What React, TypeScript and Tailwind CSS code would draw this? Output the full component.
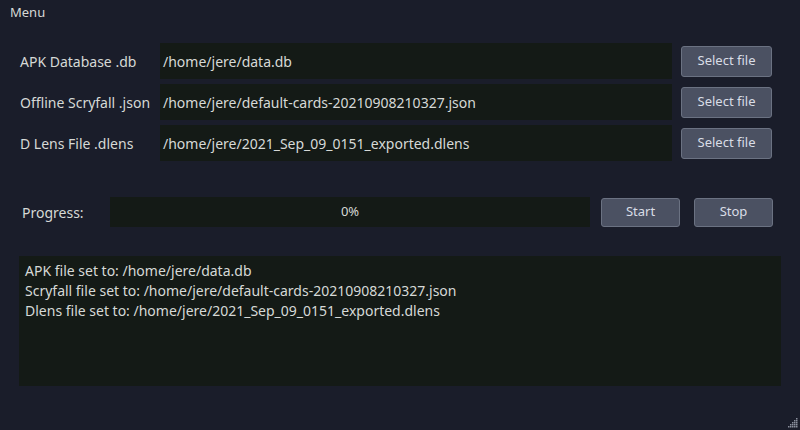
const FONT = { fontFamily: '"Noto Sans", "Open Sans", sans-serif' };

const files = [
  { label: 'APK Database .db', path: '/home/jere/data.db' },
  { label: 'Offline Scryfall .json', path: '/home/jere/default-cards-20210908210327.json' },
  { label: 'D Lens File .dlens', path: '/home/jere/2021_Sep_09_0151_exported.dlens' },
];

const log = [
  'APK file set to: /home/jere/data.db',
  'Scryfall file set to: /home/jere/default-cards-20210908210327.json',
  'Dlens file set to: /home/jere/2021_Sep_09_0151_exported.dlens',
];

function Btn({ children, className }: { children: string; className: string }) {
  return (
    <button
      className={`flex items-center justify-center rounded-[3px] border border-[#6b7282] bg-[#4b5162] text-[13px] text-[#d9dde6] ${className}`}
    >
      {children}
    </button>
  );
}

export default function App() {
  return (
    <div
      className="relative flex h-[430px] w-[800px] flex-col bg-[#1a1d2a] text-[14px] text-[#d6d9d6]"
      style={FONT}
    >
      <div className="h-[24px] pl-[10px] pt-[3px] text-[13px] leading-[18px]">Menu</div>

      {/* File pickers */}
      <div className="mt-[19px] flex flex-col gap-[5px] pl-[20px]">
        {files.map((f) => (
          <div key={f.label} className="flex h-[36px] items-center">
            <div className="w-[140px]">{f.label}</div>
            <div className="flex h-full w-[512px] items-center bg-[#141a16] pl-[3px]">{f.path}</div>
            <Btn className="ml-[9px] h-[31px] w-[91px]">Select file</Btn>
          </div>
        ))}
      </div>

      {/* Progress */}
      <div className="mt-[36px] flex h-[30px] items-center pl-[22px]">
        <div className="w-[88px]">Progress:</div>
        <div className="flex h-full w-[480px] items-center justify-center bg-[#141a16] text-[13px]">0%</div>
        <Btn className="ml-[11px] h-[29px] w-[79px]">Start</Btn>
        <Btn className="ml-[14px] h-[29px] w-[79px]">Stop</Btn>
      </div>

      {/* Log */}
      <div className="ml-[19px] mt-[29px] h-[130px] w-[762px] bg-[#141a16] px-[6px] pt-[5px] leading-[20px]">
        {log.map((l) => (
          <div key={l}>{l}</div>
        ))}
      </div>

      {/* Size grip */}
      <svg className="absolute bottom-[2px] right-[2px]" width="12" height="12" viewBox="0 0 12 12">
        {[
          [10, 2],
          [8, 4],
          [10, 4],
          [6, 6],
          [8, 6],
          [10, 6],
          [4, 8],
          [6, 8],
          [8, 8],
          [10, 8],
          [2, 10],
          [4, 10],
          [6, 10],
          [8, 10],
          [10, 10],
        ].map(([x, y], i) => (
          <rect key={i} x={x} y={y} width="1.5" height="1.5" fill="#8a8f9c" />
        ))}
      </svg>
    </div>
  );
}
